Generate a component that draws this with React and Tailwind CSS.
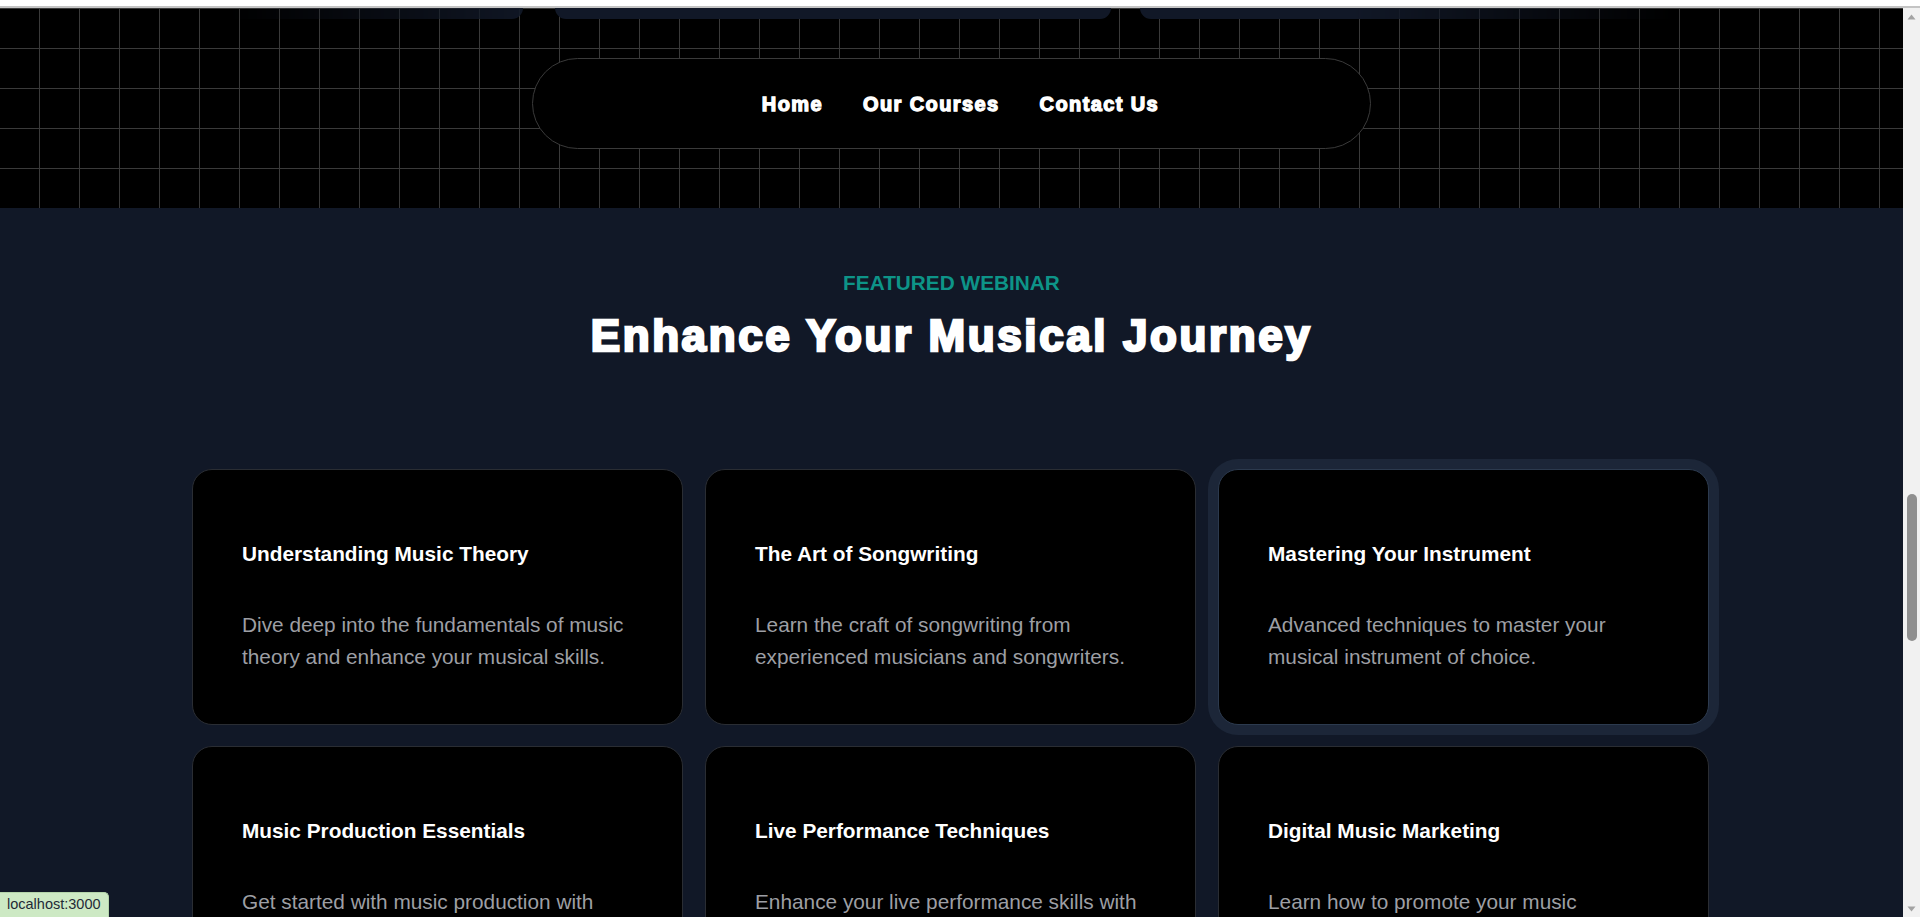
import React from "react";

const webinars = [
  {
    title: "Understanding Music Theory",
    text: "Dive deep into the fundamentals of music theory and enhance your musical skills.",
  },
  {
    title: "The Art of Songwriting",
    text: "Learn the craft of songwriting from experienced musicians and songwriters.",
  },
  {
    title: "Mastering Your Instrument",
    text: "Advanced techniques to master your musical instrument of choice.",
    active: true,
  },
  {
    title: "Music Production Essentials",
    text: "Get started with music production with essential tools and techniques.",
  },
  {
    title: "Live Performance Techniques",
    text: "Enhance your live performance skills with expert tips and practice.",
  },
  {
    title: "Digital Music Marketing",
    text: "Learn how to promote your music effectively online.",
  },
];

const WebinarCard = ({ title, text, active }) => (
  <div
    className={
      active
        ? "h-[256px] rounded-[20px] border border-[#2c3a4e] bg-black px-[49px] pt-[70px] shadow-[0_0_0_10px_#1c2638]"
        : "h-[256px] rounded-[20px] border border-[#2a2d33] bg-black px-[49px] pt-[70px]"
    }
  >
    <h3 className="text-[20.8px] font-bold leading-[28px] text-white">{title}</h3>
    <p className="mt-[41px] text-[20.8px] leading-[31.6px] text-[#9d9fa4]">{text}</p>
  </div>
);

const Scrollbar = () => (
  <div className="flex w-[17px] shrink-0 flex-col bg-[#f1f1f1]">
    <div className="flex h-[17px] items-center justify-center">
      <svg width="9" height="6" viewBox="0 0 9 6">
        <path d="M4.5 0.5 L8.5 5.5 L0.5 5.5 Z" fill="#a3a3a3" />
      </svg>
    </div>
    <div className="flex flex-1 flex-col items-center">
      <div className="mt-[469px] h-[147px] w-[10px] rounded-full bg-[#8f8f8f]" />
    </div>
    <div className="flex h-[17px] items-center justify-center">
      <svg width="9" height="6" viewBox="0 0 9 6">
        <path d="M0.5 0.5 L8.5 0.5 L4.5 5.5 Z" fill="#a3a3a3" />
      </svg>
    </div>
  </div>
);

export default function App() {
  return (
    <div className="relative flex h-[917px] w-full flex-col overflow-hidden bg-[#111827] font-['Liberation_Sans',Arial,sans-serif]">
      {/* bande du haut */}
      <div className="h-[6px] bg-white" />
      <div className="h-[2px] bg-[#c4c4c4]" />

      <div className="flex min-h-0 flex-1">
        <main className="flex min-w-0 flex-1 flex-col">
          {/* header avec la grille */}
          <header className="relative h-[200px] shrink-0 bg-black [background-image:linear-gradient(to_right,#3a3a3a_1px,transparent_1px),linear-gradient(to_bottom,#3a3a3a_1px,transparent_1px)] [background-size:40px_40px] [background-position:-1px_0px]">
            <div className="absolute left-0 right-0 top-0 flex h-[11px] [mask-image:linear-gradient(to_right,transparent_12%,black_29%,black_71%,transparent_88%)]">
              <div className="ml-[-33px] w-[556px] shrink-0 rounded-b-[12px] bg-[#111827]" />
              <div className="ml-[32px] w-[556px] shrink-0 rounded-b-[12px] bg-[#111827]" />
              <div className="ml-[29px] w-[556px] shrink-0 rounded-b-[12px] bg-[#111827]" />
            </div>

            <nav className="mx-auto mt-[50px] flex h-[91px] w-[839px] items-center justify-center gap-10 rounded-full border border-[#3a3a3a] bg-black pl-[18px]">
              {["Home", "Our Courses", "Contact Us"].map((item) => (
                <a
                  key={item}
                  href="#"
                  className="text-[20px] font-bold leading-[28px] tracking-[1.4px] text-white [-webkit-text-stroke:1.3px_white]"
                >
                  {item}
                </a>
              ))}
            </nav>
          </header>

          {/* section webinars */}
          <section className="flex-1 bg-[#111827] pt-[61px]">
            <p className="text-center text-[20.8px] font-bold uppercase leading-[28px] text-[#0d9488]">
              Featured Webinar
            </p>
            <h2 className="mt-[15px] text-center text-[44px] font-bold leading-[48px] tracking-[2.6px] text-white [-webkit-text-stroke:2.5px_white]">
              Enhance Your Musical Journey
            </h2>

            <div className="ml-[192px] mt-[109px] grid w-[1517px] grid-cols-3 gap-x-[22px] gap-y-[21px]">
              {webinars.map((w) => (
                <WebinarCard key={w.title} {...w} />
              ))}
            </div>
          </section>
        </main>

        <Scrollbar />
      </div>

      {/* bulle de statut */}
      <div className="absolute bottom-0 left-0 flex h-[25px] items-center rounded-tr-[5px] border-r border-t border-[#b4d4aa] bg-[#cde9c4] px-[7px] text-[14.5px] text-[#1f2937]">
        localhost:3000
      </div>
    </div>
  );
}
